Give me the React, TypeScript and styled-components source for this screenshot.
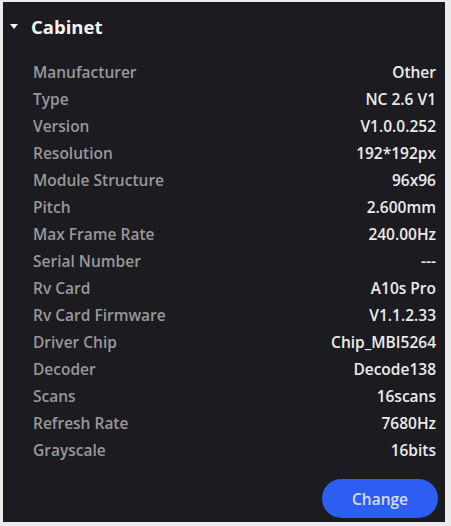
import React from "react";
import styled, { createGlobalStyle } from "styled-components";

const GlobalStyle = createGlobalStyle`
  html, body {
    margin: 0;
    padding: 0;
    background: #ebebeb;
  }
  body {
    font-family: "Open Sans", "Noto Sans", sans-serif;
  }
`;

const rows: [string, string][] = [
  ["Manufacturer", "Other"],
  ["Type", "NC 2.6 V1"],
  ["Version", "V1.0.0.252"],
  ["Resolution", "192*192px"],
  ["Module Structure", "96x96"],
  ["Pitch", "2.600mm"],
  ["Max Frame Rate", "240.00Hz"],
  ["Serial Number", "---"],
  ["Rv Card", "A10s Pro"],
  ["Rv Card Firmware", "V1.1.2.33"],
  ["Driver Chip", "Chip_MBI5264"],
  ["Decoder", "Decode138"],
  ["Scans", "16scans"],
  ["Refresh Rate", "7680Hz"],
  ["Grayscale", "16bits"],
];

const App: React.FC = () => {
  return (
    <>
      <GlobalStyle />
      <Panel>
        <Header>
          <Caret />
          <Title>Cabinet</Title>
        </Header>
        <InfoList>
          {rows.map(([label, value]) => (
            <InfoRow key={label}>
              <Label>{label}</Label>
              <Value>{value}</Value>
            </InfoRow>
          ))}
        </InfoList>
        <Footer>
          <ChangeButton>Change</ChangeButton>
        </Footer>
      </Panel>
    </>
  );
};

const Panel = styled.div`
  box-sizing: border-box;
  margin: 2px 0 0 3px;
  width: 442px;
  height: 520px;
  background: #1c1b20;
  display: flex;
  flex-direction: column;
`;

const Header = styled.div`
  display: flex;
  align-items: center;
  height: 28px;
  margin-top: 10px;
  padding-left: 7px;
`;

const Caret = styled.span`
  width: 0;
  height: 0;
  border-left: 4px solid transparent;
  border-right: 4px solid transparent;
  border-top: 5px solid #f2f2f2;
  margin-right: 13px;
`;

const Title = styled.span`
  color: #f4f4f4;
  font-size: 18.5px;
  font-weight: 700;
`;

const InfoList = styled.div`
  display: flex;
  flex-direction: column;
  margin-top: 18px;
  padding: 0 9px 0 30px;
`;

const InfoRow = styled.div`
  display: flex;
  justify-content: space-between;
  align-items: center;
  height: 27px;
  font-size: 15.5px;
  font-weight: 600;
`;

const Label = styled.span`
  color: #98989b;
`;

const Value = styled.span`
  color: #ececec;
`;

const Footer = styled.div`
  display: flex;
  justify-content: flex-end;
  margin-top: 16px;
  padding-right: 7px;
`;

const ChangeButton = styled.button`
  width: 116px;
  height: 39px;
  border: none;
  border-radius: 20px;
  background: #2d5ef3;
  color: #d4defc;
  font-family: "Open Sans", "Noto Sans", sans-serif;
  font-size: 15.5px;
  font-weight: 600;
  cursor: pointer;
`;

export default App;
